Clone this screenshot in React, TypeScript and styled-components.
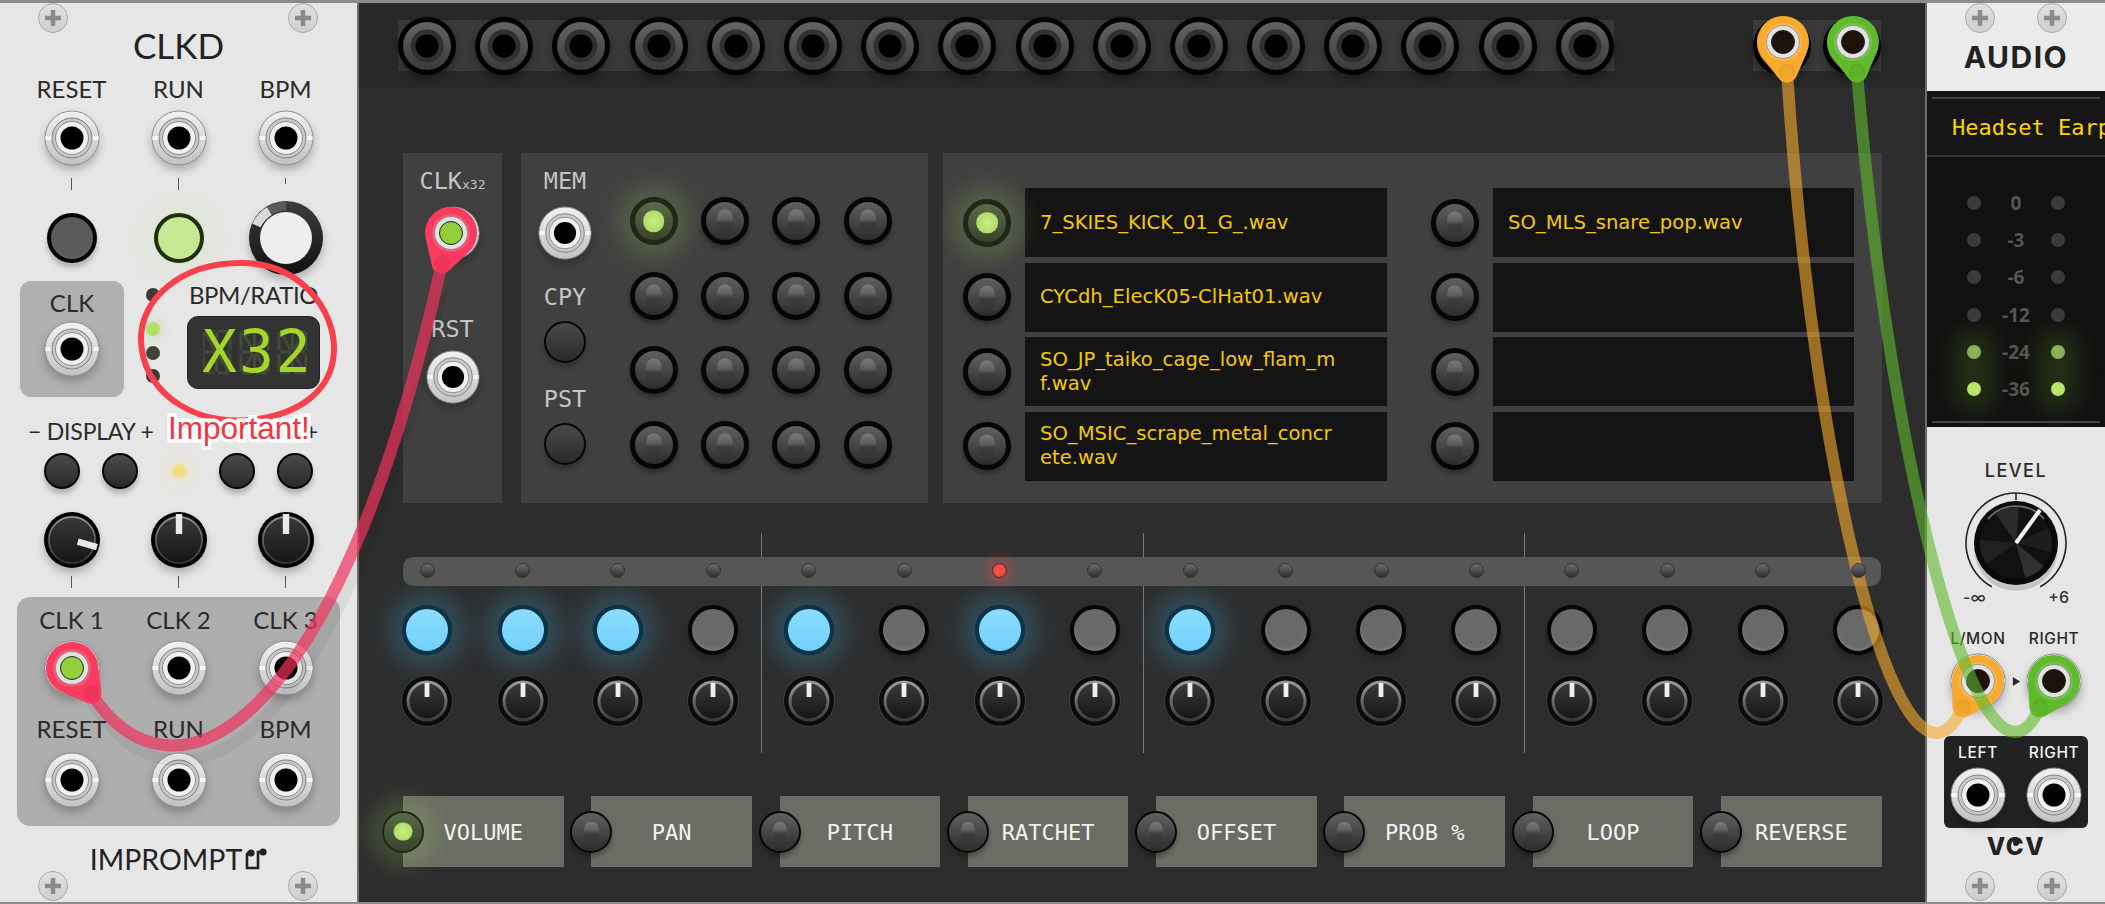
import React from 'react';
import styled, { createGlobalStyle } from 'styled-components';

const LABEL_FONT = `Lato, "Noto Sans", sans-serif`;
const MONO_FONT = `"DejaVu Sans Mono", monospace`;

const GlobalStyle = createGlobalStyle`
    html, body {
        margin: 0;
        padding: 0;
        background: #8b8b8b;
        font-family: ${LABEL_FONT};
    }
`;

const Rack = styled.div`
    position: relative;
    display: flex;
    box-sizing: border-box;
    width: 2105px;
    height: 904px;
    padding: 3px 0 2px;
    overflow: hidden;
    background: #8b8b8b;
`;

const Defs = styled.svg`
    position: absolute;
    width: 0;
    height: 0;
`;

/* ---------- shared drawings ---------- */

const Drawing = styled.svg<{ $size: number; $shadow?: string }>`
    display: block;
    flex: none;
    width: ${(p) => p.$size}px;
    height: ${(p) => p.$size}px;
    overflow: visible;
    filter: ${(p) => p.$shadow ?? 'none'};
`;

const LIGHT_SHADOW = 'drop-shadow(0 5px 4px rgba(0,0,0,.24))';
const DARK_SHADOW = 'drop-shadow(0 4px 4px rgba(0,0,0,.35))';

const SilverJack = ({ size = 56 }: { size?: number }) => (
    <Drawing viewBox="0 0 56 56" $size={size} $shadow={LIGHT_SHADOW}>
        <circle cx="28" cy="28" r="27" fill="url(#silver)" stroke="#8d8d8d" />
        <rect x="1.5" y="26" width="53" height="4" fill="#f6f6f6" />
        <circle cx="28" cy="28" r="20" fill="#c8c8c8" stroke="#808080" />
        <circle cx="28" cy="28" r="16.5" fill="#f0f0f0" stroke="#8a8a8a" />
        <circle cx="28" cy="28" r="11.5" fill="#000" />
    </Drawing>
);

const DarkJack = () => (
    <Drawing viewBox="0 0 58 58" $size={58} $shadow={DARK_SHADOW}>
        <circle cx="29" cy="29" r="29" fill="#000" />
        <circle cx="29" cy="29" r="24" fill="url(#darkRing)" />
        <circle cx="29" cy="29" r="16.5" fill="#303030" />
        <circle cx="29" cy="29" r="11.5" fill="#000" />
    </Drawing>
);

const Screw = () => (
    <Drawing viewBox="0 0 30 30" $size={30}>
        <circle cx="15" cy="15" r="14.5" fill="url(#screw)" stroke="#a8a8a8" />
        <path d="M15 7v16M7 15h16" stroke="#8a8a8a" strokeWidth="4.5" />
    </Drawing>
);

const BlackKnob = ({ angle = 0 }: { angle?: number }) => (
    <Drawing viewBox="0 0 56 56" $size={56} $shadow={LIGHT_SHADOW}>
        <circle cx="28" cy="28" r="28" fill="#000" />
        <circle cx="28" cy="28" r="24.5" fill="url(#knobFace)" />
        <circle cx="28" cy="28" r="23" fill="none" stroke="url(#knobEdge)" strokeWidth="1.4" />
        <rect x="24.8" y="2" width="6.4" height="20" fill="#e9e9e9" transform={`rotate(${angle} 28 28)`} />
    </Drawing>
);

const StepKnob = () => (
    <Drawing viewBox="0 0 52 52" $size={52}>
        <circle cx="26" cy="26" r="25.5" fill="#0b0b0b" stroke="#414141" />
        <circle cx="26" cy="26" r="19" fill="url(#knobFace)" stroke="url(#knobEdge)" strokeWidth="3" />
        <rect x="23.6" y="8" width="4.8" height="14" fill="#eeeeee" />
    </Drawing>
);

const WhiteKnob = () => (
    <Drawing viewBox="0 0 74 74" $size={74} $shadow={LIGHT_SHADOW}>
        <circle cx="37" cy="37" r="37" fill="url(#whiteKnobRim)" />
        <path d="M7.5 24.5A32 32 0 0 1 20.5 10" fill="none" stroke="#d9d9d9" strokeWidth="9" />
        <path d="M20.5 10A32 32 0 0 1 37 5" fill="none" stroke="#5a5a5a" strokeWidth="9" />
        <circle cx="37" cy="37" r="26" fill="#eeeeee" />
    </Drawing>
);

const wedge = (from: number, to: number, r: number, c: number) => {
    const rad = (d: number) => ((d - 90) * Math.PI) / 180;
    const x1 = c + r * Math.cos(rad(from));
    const y1 = c + r * Math.sin(rad(from));
    const x2 = c + r * Math.cos(rad(to));
    const y2 = c + r * Math.sin(rad(to));
    return `M${c} ${c}L${x1} ${y1}A${r} ${r} 0 0 1 ${x2} ${y2}Z`;
};

const LevelKnob = () => (
    <Drawing viewBox="0 0 110 110" $size={110}>
        <path d="M30.8 98.7A50 50 0 1 1 79.2 98.7" fill="none" stroke="#222" strokeWidth="1.6" />
        <path d="M55 5v7" stroke="#222" strokeWidth="1.6" />
        <circle cx="55" cy="61" r="42" fill="#bdbdbd" opacity=".8" />
        <circle cx="55" cy="55" r="42" fill="#0a0a0a" />
        <path d="M27 31A37 37 0 0 1 83 31" fill="none" stroke="#6a6a6a" strokeWidth="2" />
        <circle cx="55" cy="55" r="36" fill="#111" />
        <path d={wedge(-35, 5, 36, 55)} fill="#2a2a2a" />
        <path d={wedge(65, 105, 36, 55)} fill="#1d1d1d" />
        <path d={wedge(130, 165, 36, 55)} fill="#303030" />
        <path d={wedge(235, 275, 36, 55)} fill="#202020" />
        <path d="M55 55L79 22" stroke="#f2f2f2" strokeWidth="4" />
    </Drawing>
);

const DropMark = () => (
    <Drawing viewBox="0 0 10 10" $size={9}>
        <path d="M1 0L9 5L1 10Z" fill="#2a2a2a" />
    </Drawing>
);

/* ---------- buttons and lights ---------- */

type PadTone = 'slate' | 'grey' | 'soft' | 'blue' | 'green';

const Pad = styled.div<{ $size: number; $border: number; $tone: PadTone }>`
    box-sizing: border-box;
    flex: none;
    width: ${(p) => p.$size}px;
    height: ${(p) => p.$size}px;
    border-radius: 50%;
    border: ${(p) => p.$border}px solid
        ${(p) => (p.$tone === 'blue' ? '#08344a' : p.$tone === 'green' ? '#20300e' : '#050505')};
    background: ${(p) =>
        p.$tone === 'blue'
            ? 'linear-gradient(#8cdcff, #72d0fb)'
            : p.$tone === 'green'
            ? '#c6e794'
            : p.$tone === 'grey'
            ? 'radial-gradient(circle at 50% 45%, #696969 60%, #7d7d7d 75%, #565656)'
            : p.$tone === 'slate'
            ? 'radial-gradient(circle at 50% 45%, #5a5a5a 60%, #666 80%, #4a4a4a)'
            : 'linear-gradient(#4a4a4a, #2a2a2a)'};
    box-shadow: ${(p) =>
        p.$tone === 'blue'
            ? '0 0 22px 15px rgba(64, 158, 205, .26)'
            : p.$tone === 'green'
            ? '0 0 26px 12px rgba(200, 230, 150, .18)'
            : '0 5px 5px rgba(0, 0, 0, .22)'};
`;

const BezelButton = styled.div<{ $size: number; $on?: boolean }>`
    position: relative;
    box-sizing: border-box;
    flex: none;
    width: ${(p) => p.$size}px;
    height: ${(p) => p.$size}px;
    border-radius: 50%;
    border: ${(p) => (p.$size > 44 ? 5 : 2)}px solid ${(p) => (p.$on ? '#1d2914' : '#060606')};
    background: ${(p) =>
        p.$on ? 'linear-gradient(#5a6a48, #39432c)' : 'linear-gradient(#606060, #2c2c2c)'};
    box-shadow: ${(p) =>
        p.$on ? '0 0 24px 12px rgba(170, 220, 100, .22)' : '0 4px 4px rgba(0, 0, 0, .28)'};

    &::after {
        content: '';
        position: absolute;
        left: 50%;
        top: 50%;
        width: ${(p) => (p.$on ? p.$size * 0.45 : p.$size * 0.34)}px;
        height: ${(p) => (p.$on ? p.$size * 0.45 : p.$size * 0.48)}px;
        border-radius: ${(p) => (p.$on ? '50%' : '42%')};
        transform: translate(-50%, -50%);
        background: ${(p) =>
            p.$on
                ? 'radial-gradient(circle, #c8ee83, #a4d45c)'
                : 'linear-gradient(#7a7a7a, #5e5e5e 42%, #3c3c3c 58%, #363636)'};
    }
`;

const Led = styled.div<{ $color: string; $glow?: string; $size?: number }>`
    flex: none;
    width: ${(p) => p.$size ?? 14}px;
    height: ${(p) => p.$size ?? 14}px;
    border-radius: 50%;
    background: ${(p) => p.$color};
    box-shadow: ${(p) => p.$glow ?? 'none'};
`;

const BarLed = styled.div<{ $red?: boolean }>`
    position: relative;
    z-index: 1;
    box-sizing: border-box;
    width: 15px;
    height: 15px;
    border-radius: 50%;
    border: 1px solid #333;
    background: ${(p) =>
        p.$red ? 'radial-gradient(circle, #ff5b50, #ee3a30)' : 'linear-gradient(#6c6c6c, #303030)'};
    box-shadow: ${(p) => (p.$red ? '0 0 12px 5px rgba(255, 60, 50, .38)' : 'none')};
`;

/* ---------- left module ---------- */

const LeftPanel = styled.div`
    flex: none;
    width: 357px;
    background: #e6e6e6;
    border-right: 2px solid #6d6d6d;
`;

const ScrewRow = styled.div<{ $left: number; $gap: number; $top?: number }>`
    display: flex;
    height: 30px;
    gap: ${(p) => p.$gap}px;
    padding-left: ${(p) => p.$left}px;
    margin-top: ${(p) => p.$top ?? 0}px;
`;

const Title = styled.div`
    height: 24px;
    line-height: 24px;
    text-align: center;
    font-size: 35px;
    color: #222;
`;

const ThreeCol = styled.div<{ $top: number; $height: number; $left?: number }>`
    display: grid;
    grid-template-columns: repeat(3, 107px);
    justify-items: center;
    align-items: center;
    height: ${(p) => p.$height}px;
    margin-top: ${(p) => p.$top}px;
    padding-left: ${(p) => p.$left ?? 18}px;
`;

const PanelLabel = styled.div<{ $size?: number }>`
    font-size: ${(p) => p.$size ?? 24}px;
    line-height: 20px;
    color: #2a2a2a;
    white-space: nowrap;
`;

const Tick = styled.div<{ $short?: boolean }>`
    width: 1px;
    height: ${(p) => (p.$short ? 6 : 12)}px;
    align-self: start;
    background: #555;
`;

const MiddleRow = styled.div`
    display: flex;
    height: 116px;
    margin-top: 30px;
    padding-left: 20px;
`;

const ClkBox = styled.div`
    display: flex;
    flex-direction: column;
    align-items: center;
    gap: 8px;
    width: 104px;
    padding-top: 12px;
    box-sizing: border-box;
    border-radius: 11px;
    background: #b0b0b0;
`;

const LedColumn = styled.div`
    display: flex;
    flex-direction: column;
    gap: 9.5px;
    width: 14px;
    margin-left: 22px;
    padding-top: 7px;

    & > :first-child {
        margin-bottom: 10.5px;
    }
`;

const RatioBlock = styled.div`
    width: 133px;
    margin-left: 27px;
`;

const RatioLabel = styled(PanelLabel)`
    height: 28px;
    line-height: 28px;
    margin-bottom: 7px;
    text-align: center;
    letter-spacing: -0.4px;
`;

const SegmentDisplay = styled.div`
    position: relative;
    box-sizing: border-box;
    height: 73px;
    padding-left: 14px;
    border: 1px solid #222;
    border-radius: 11px;
    background: #333;
    overflow: hidden;
`;

const GhostSegments = styled.svg`
    position: absolute;
    left: 15px;
    top: 13px;
    width: 104px;
    height: 45px;
`;

const SegmentText = styled.div`
    position: relative;
    font-family: ${MONO_FONT};
    font-size: 58px;
    line-height: 71px;
    letter-spacing: 2px;
    color: #a5d72b;
`;

const DisplayLabels = styled.div`
    display: flex;
    justify-content: space-between;
    height: 22px;
    margin-top: 23px;
    padding: 0 39px 0 28px;
    font-size: 23px;
    line-height: 22px;
    letter-spacing: -0.2px;
    color: #2a2a2a;
`;

const DisplayRow = styled.div`
    display: grid;
    grid-template-columns: repeat(5, 58.25px);
    justify-items: center;
    align-items: center;
    height: 36px;
    margin-top: 11px;
    padding-left: 33px;
`;

const GroupBox = styled.div`
    width: 323px;
    height: 229px;
    margin: 9px 0 0 17px;
    padding-top: 13px;
    box-sizing: border-box;
    border-radius: 13px;
    background: #aeaeae;
`;

const BrandRow = styled.div`
    display: flex;
    justify-content: center;
    align-items: center;
    gap: 1px;
    height: 25px;
    margin-top: 20px;
    font-size: 28.5px;
    color: #222;
`;

const NoteMark = styled.svg`
    width: 24px;
    height: 24px;
`;

/* ---------- middle module ---------- */

const MiddlePanel = styled.div`
    flex: 1;
    min-width: 0;
    background: #2d2d2d;
`;

const TopBand = styled.div`
    display: flex;
    align-items: center;
    height: 85px;
    padding-left: 39px;
    background: #282828;
`;

const JackStrip = styled.div<{ $gap: number; $left?: number }>`
    display: flex;
    align-items: center;
    gap: ${(p) => p.$gap}px;
    height: 51px;
    margin-left: ${(p) => p.$left ?? 0}px;
    background: #3a3a3a;
`;

const PanelRow = styled.div`
    display: flex;
    height: 350px;
    margin-top: 65px;
    padding-left: 44px;
`;

const Block = styled.div<{ $width: number; $left?: number }>`
    box-sizing: border-box;
    flex: none;
    width: ${(p) => p.$width}px;
    margin-left: ${(p) => p.$left ?? 0}px;
    background: #404040;
`;

const StackColumn = styled.div<{ $width?: number }>`
    display: flex;
    flex-direction: column;
    align-items: center;
    width: ${(p) => (p.$width ? `${p.$width}px` : 'auto')};
    padding-top: 17px;
    flex: none;
`;

const MonoLabel = styled.div<{ $top?: number }>`
    height: 22px;
    margin-top: ${(p) => p.$top ?? 0}px;
    font-family: ${MONO_FONT};
    font-size: 23.5px;
    line-height: 22px;
    color: #c4c4c4;
    white-space: nowrap;
`;

const SmallMono = styled.span`
    font-size: 13px;
`;

const Spaced = styled.div<{ $top: number }>`
    margin-top: ${(p) => p.$top}px;
`;

const MemBlock = styled(Block)`
    display: flex;
`;

const MemGrid = styled.div`
    display: grid;
    grid-template-columns: repeat(4, 71.3px);
    grid-template-rows: repeat(4, 74.6px);
    justify-items: center;
    align-items: center;
    margin: 31px 0 0 9px;
`;

const SampleGrid = styled.div`
    display: grid;
    grid-template-columns: 82.5px 362px 106px 361px;
    grid-auto-rows: 69px;
    row-gap: 5.6px;
    align-items: center;
    padding-top: 35px;
`;

const SampleButton = styled.div`
    justify-self: end;
    margin-right: 14px;
`;

const SampleBox = styled.div`
    display: flex;
    align-items: center;
    box-sizing: border-box;
    height: 69px;
    padding-left: 15px;
    background: #141414;
    font-family: "DejaVu Sans", sans-serif;
    font-size: 19.6px;
    line-height: 24px;
    color: #f6c900;
    white-space: pre-line;
`;

const StepArea = styled.div`
    position: relative;
    display: flex;
    height: 220px;
    margin-top: 30px;
    padding-left: 20.5px;
`;

const StepBar = styled.div`
    position: absolute;
    left: 44px;
    top: 24px;
    width: 1478px;
    height: 29px;
    border-radius: 10px;
    background: #565656;
`;

const StepGroup = styled.div<{ $divider: boolean }>`
    display: grid;
    grid-template-columns: repeat(4, 95.4px);
    flex: none;
    box-shadow: ${(p) => (p.$divider ? '1px 0 0 #787878' : 'none')};
`;

const Step = styled.div`
    display: flex;
    flex-direction: column;
    align-items: center;
    padding-top: 30px;
`;

const ModeRow = styled.div`
    display: flex;
    gap: 27.8px;
    margin-top: 43px;
    padding-left: 44px;
`;

const ModeBox = styled.div`
    display: flex;
    align-items: center;
    flex: none;
    width: 160.5px;
    height: 71px;
    background: #6b6c63;
`;

const ModeSwitch = styled.div`
    margin: 0 -21px;
`;

const ModeLabel = styled.div`
    flex: 1;
    padding-top: 2px;
    text-align: center;
    font-family: ${MONO_FONT};
    font-size: 22px;
    color: #f2f2f2;
`;

/* ---------- right module ---------- */

const RightPanel = styled.div`
    flex: none;
    width: 178px;
    border-left: 2px solid #6d6d6d;
    background: #e6e6e6;
    overflow: hidden;
`;

const AudioHead = styled.div`
    height: 88px;
    background: #ebebeb;
`;

const AudioTitle = styled.div`
    height: 28px;
    margin-top: 10px;
    text-align: center;
    font-family: Inter, ${LABEL_FONT};
    font-weight: 700;
    font-size: 30px;
    line-height: 28px;
    letter-spacing: 1.5px;
    color: #222;
`;

const MeterScreen = styled.div`
    height: 336px;
    background: #111;
    overflow: hidden;
`;

const DeviceRow = styled.div`
    box-sizing: border-box;
    height: 66px;
    margin-bottom: 27.4px;
    padding: 6px 5px 0;
    border-bottom: 2px solid #333;
    background: #161616;
`;

const DeviceRule = styled.div<{ $top?: number }>`
    height: 2px;
    margin-top: ${(p) => p.$top ?? 0}px;
    background: #444;
`;

const DeviceName = styled.div`
    margin: 16px 0 0 20px;
    font-family: ${MONO_FONT};
    font-size: 22px;
    line-height: 26px;
    color: #ffd400;
    white-space: nowrap;
`;

const MeterRow = styled.div`
    display: grid;
    grid-template-columns: 22px 62px 22px;
    justify-items: center;
    align-items: center;
    height: 37.2px;
    padding-left: 36px;
`;

const MeterLabel = styled.div`
    font-family: "Noto Sans", sans-serif;
    font-weight: 700;
    font-size: 19px;
    color: #555;
`;

const MeterFoot = styled.div`
    margin: 13px 5px 0;
`;

const LevelSection = styled.div`
    display: flex;
    flex-direction: column;
    align-items: center;
    padding-top: 33px;
`;

const LevelLabel = styled.div`
    height: 22px;
    font-family: Inter, ${LABEL_FONT};
    font-weight: 500;
    font-size: 18px;
    line-height: 22px;
    letter-spacing: 1.5px;
    color: #2a2a2a;
`;

const RangeRow = styled.div`
    display: flex;
    justify-content: space-between;
    width: 106px;
    height: 18px;
    margin-top: -10px;
    font-family: Inter, ${LABEL_FONT};
    font-weight: 500;
    font-size: 16px;
    line-height: 18px;
    color: #333;
`;

const TwoCol = styled.div<{ $top: number; $height: number; $left?: number }>`
    display: grid;
    grid-template-columns: 66px 10px 66px;
    justify-items: center;
    align-items: center;
    align-self: flex-start;
    height: ${(p) => p.$height}px;
    margin-top: ${(p) => p.$top}px;
    padding-left: ${(p) => p.$left ?? 18}px;
`;

const JackLabel = styled.div<{ $light?: boolean }>`
    font-family: Inter, ${LABEL_FONT};
    font-weight: 500;
    font-size: 15.5px;
    line-height: 18px;
    letter-spacing: 0.6px;
    white-space: nowrap;
    color: ${(p) => (p.$light ? '#f2f2f2' : '#2a2a2a')};
`;

const OutputBox = styled.div`
    align-self: flex-start;
    box-sizing: border-box;
    width: 144px;
    height: 92px;
    margin: 27px 0 0 17px;
    padding-top: 8px;
    border-radius: 6px;
    background: #222;
`;

const VcvLogo = styled.div`
    height: 22px;
    margin-top: 8px;
    font-family: Inter, ${LABEL_FONT};
    font-weight: 800;
    font-size: 24px;
    line-height: 22px;
    letter-spacing: 1.5px;
    color: #222;
`;

const VcvDot = styled.span`
    position: relative;

    &::after {
        content: '';
        position: absolute;
        left: 7px;
        top: 8px;
        width: 6px;
        height: 6px;
        border-radius: 50%;
        background: #222;
    }
`;

/* ---------- overlays ---------- */

const CableLayer = styled.svg`
    position: absolute;
    left: 0;
    top: 0;
    width: 2105px;
    height: 904px;
    pointer-events: none;
`;

const ImportantNote = styled.div`
    position: absolute;
    left: 168px;
    top: 409px;
    font-family: "Liberation Sans", Arial, sans-serif;
    font-size: 31.5px;
    line-height: 38px;
    color: #f4353f;
    -webkit-text-stroke: 7px #fff;
    paint-order: stroke fill;
    white-space: nowrap;
`;

/* ---------- data ---------- */

const segmentPath =
    'M1 1H12M15 1H26M0 2V20M13.5 2V20M27 2V20M0 24V42M13.5 24V42M27 24V42M1 22H12M15 22H26M1 43H12M15 43H26M2 3L12 20M25 3L15 20M2 41L12 24M25 41L15 24';

const SAMPLES = [
    ['7_SKIES_KICK_01_G_.wav', 'SO_MLS_snare_pop.wav'],
    ['CYCdh_ElecK05-ClHat01.wav', ''],
    ['SO_JP_taiko_cage_low_flam_m\nf.wav', ''],
    ['SO_MSIC_scrape_metal_concr\nete.wav', ''],
];

const MODES = ['VOLUME', 'PAN', 'PITCH', 'RATCHET', 'OFFSET', 'PROB %', 'LOOP', 'REVERSE'];
const ACTIVE_STEPS = [0, 1, 2, 4, 6, 8];
const LEVELS = ['0', '-3', '-6', '-12', '-24', '-36'];
const METER_GLOW = '0 0 26px 14px rgba(130, 190, 50, .2)';

const plugPath = (cx: number, cy: number, R: number, tx: number, ty: number, r: number) => {
    const d = Math.hypot(tx - cx, ty - cy);
    const a = Math.atan2(ty - cy, tx - cx);
    const b = Math.acos((R - r) / d);
    const pt = (x: number, y: number, rad: number, ang: number) =>
        `${(x + rad * Math.cos(ang)).toFixed(1)} ${(y + rad * Math.sin(ang)).toFixed(1)}`;
    return `M${pt(cx, cy, R, a + b)}L${pt(tx, ty, r, a + b)}A${r} ${r} 0 0 0 ${pt(tx, ty, r, a - b)}L${pt(
        cx,
        cy,
        R,
        a - b
    )}A${R} ${R} 0 1 0 ${pt(cx, cy, R, a + b)}Z`;
};

const Plug = ({
    x,
    y,
    tx,
    ty,
    color,
    hole,
}: {
    x: number;
    y: number;
    tx: number;
    ty: number;
    color: string;
    hole: string;
}) => (
    <g>
        <path d={plugPath(x, y, 26, tx, ty, 10.5)} fill={color} />
        <circle cx={tx} cy={ty} r="8" fill="#000" opacity=".07" />
        <circle cx={x} cy={y} r="19" fill="#fff" opacity=".14" />
        <circle cx={x} cy={y} r="16.5" fill="#e2e2e2" stroke="#8a8a8a" strokeWidth=".8" />
        <circle cx={x} cy={y} r="11.5" fill={hole} stroke="#222" strokeWidth="1" />
    </g>
);

const App: React.FC = () => {
    return (
        <Rack>
            <GlobalStyle />
            <Defs>
                <defs>
                    <linearGradient id="silver" x1="0" y1="0" x2="0" y2="1">
                        <stop offset="0" stopColor="#f2f2f2" />
                        <stop offset="1" stopColor="#c2c2c2" />
                    </linearGradient>
                    <linearGradient id="darkRing" x1="0" y1="0" x2="0" y2="1">
                        <stop offset="0" stopColor="#646464" />
                        <stop offset="1" stopColor="#3a3a3a" />
                    </linearGradient>
                    <linearGradient id="screw" x1="0" y1="0" x2="0" y2="1">
                        <stop offset="0" stopColor="#e2e2e2" />
                        <stop offset="1" stopColor="#cecece" />
                    </linearGradient>
                    <linearGradient id="knobFace" x1="0" y1="0" x2="0" y2="1">
                        <stop offset="0" stopColor="#3a3a3a" />
                        <stop offset="1" stopColor="#141414" />
                    </linearGradient>
                    <linearGradient id="knobEdge" x1="0" y1="0" x2="0" y2="1">
                        <stop offset="0" stopColor="#9a9a9a" />
                        <stop offset="1" stopColor="#3a3a3a" />
                    </linearGradient>
                    <linearGradient id="whiteKnobRim" x1="0" y1="0" x2="0" y2="1">
                        <stop offset="0" stopColor="#3d3d3d" />
                        <stop offset="1" stopColor="#111" />
                    </linearGradient>
                </defs>
            </Defs>

            <LeftPanel>
                <ScrewRow $left={38} $gap={220}>
                    <Screw />
                    <Screw />
                </ScrewRow>
                <Title>CLKD</Title>
                <ThreeCol $top={22} $height={20}>
                    <PanelLabel>RESET</PanelLabel>
                    <PanelLabel>RUN</PanelLabel>
                    <PanelLabel>BPM</PanelLabel>
                </ThreeCol>
                <ThreeCol $top={11} $height={56}>
                    <SilverJack />
                    <SilverJack />
                    <SilverJack />
                </ThreeCol>
                <ThreeCol $top={12} $height={12}>
                    <Tick />
                    <Tick />
                    <Tick $short />
                </ThreeCol>
                <ThreeCol $top={11} $height={50}>
                    <Pad $size={50} $border={4} $tone="slate" />
                    <Pad $size={50} $border={4} $tone="green" />
                    <WhiteKnob />
                </ThreeCol>
                <MiddleRow>
                    <ClkBox>
                        <PanelLabel>CLK</PanelLabel>
                        <SilverJack />
                    </ClkBox>
                    <LedColumn>
                        <Led $color="#3a3a3a" />
                        <Led $color="#b4e068" $glow="0 0 10px 4px rgba(170,220,100,.25)" />
                        <Led $color="#3f4434" />
                        <Led $color="#3a3a3a" />
                    </LedColumn>
                    <RatioBlock>
                        <RatioLabel>BPM/RATIO</RatioLabel>
                        <SegmentDisplay>
                            <GhostSegments viewBox="0 0 104 45">
                                {[0, 38, 76].map((x) => (
                                    <path
                                        key={x}
                                        d={segmentPath}
                                        transform={`translate(${x} 0)`}
                                        fill="none"
                                        stroke="#434b36"
                                        strokeWidth="3"
                                    />
                                ))}
                            </GhostSegments>
                            <SegmentText>X32</SegmentText>
                        </SegmentDisplay>
                    </RatioBlock>
                </MiddleRow>
                <DisplayLabels>
                    <span>− DISPLAY +</span>
                    <span>+</span>
                </DisplayLabels>
                <DisplayRow>
                    <Pad $size={36} $border={2} $tone="soft" />
                    <Pad $size={36} $border={2} $tone="soft" />
                    <Led $color="#f4dc80" $glow="0 0 14px 8px rgba(250,225,130,.2)" />
                    <Pad $size={36} $border={2} $tone="soft" />
                    <Pad $size={36} $border={2} $tone="soft" />
                </DisplayRow>
                <ThreeCol $top={23} $height={56}>
                    <BlackKnob angle={106} />
                    <BlackKnob />
                    <BlackKnob />
                </ThreeCol>
                <ThreeCol $top={8} $height={12}>
                    <Tick />
                    <Tick />
                    <Tick />
                </ThreeCol>
                <GroupBox>
                    <ThreeCol $top={0} $height={20} $left={1}>
                        <PanelLabel>CLK 1</PanelLabel>
                        <PanelLabel>CLK 2</PanelLabel>
                        <PanelLabel>CLK 3</PanelLabel>
                    </ThreeCol>
                    <ThreeCol $top={10} $height={56} $left={1}>
                        <SilverJack />
                        <SilverJack />
                        <SilverJack />
                    </ThreeCol>
                    <ThreeCol $top={23} $height={20} $left={1}>
                        <PanelLabel>RESET</PanelLabel>
                        <PanelLabel>RUN</PanelLabel>
                        <PanelLabel>BPM</PanelLabel>
                    </ThreeCol>
                    <ThreeCol $top={13} $height={56} $left={1}>
                        <SilverJack />
                        <SilverJack />
                        <SilverJack />
                    </ThreeCol>
                </GroupBox>
                <BrandRow>
                    IMPROMPT
                    <NoteMark viewBox="0 0 24 24">
                        <path d="M4 6V21H15V5H20" fill="none" stroke="#222" strokeWidth="2.6" />
                        <path d="M4 6H9" stroke="#222" strokeWidth="2.6" />
                        <circle cx="8" cy="6" r="3.6" fill="#222" />
                        <circle cx="20" cy="5" r="3.6" fill="#222" />
                    </NoteMark>
                </BrandRow>
                <ScrewRow $left={38} $gap={220}>
                    <Screw />
                    <Screw />
                </ScrewRow>
            </LeftPanel>

            <MiddlePanel>
                <TopBand>
                    <JackStrip $gap={19.2}>
                        {Array.from({ length: 16 }, (_, i) => (
                            <DarkJack key={i} />
                        ))}
                    </JackStrip>
                    <JackStrip $gap={12} $left={139}>
                        <DarkJack />
                        <DarkJack />
                    </JackStrip>
                </TopBand>

                <PanelRow>
                    <Block $width={99}>
                        <StackColumn>
                            <MonoLabel>
                                CLK<SmallMono>x32</SmallMono>
                            </MonoLabel>
                            <Spaced $top={14}>
                                <SilverJack size={54} />
                            </Spaced>
                            <MonoLabel $top={58}>RST</MonoLabel>
                            <Spaced $top={10}>
                                <SilverJack size={54} />
                            </Spaced>
                        </StackColumn>
                    </Block>
                    <MemBlock $width={407} $left={19}>
                        <StackColumn $width={88}>
                            <MonoLabel>MEM</MonoLabel>
                            <Spaced $top={14}>
                                <SilverJack size={54} />
                            </Spaced>
                            <MonoLabel $top={26}>CPY</MonoLabel>
                            <Spaced $top={13}>
                                <Pad $size={42} $border={2} $tone="soft" />
                            </Spaced>
                            <MonoLabel $top={25}>PST</MonoLabel>
                            <Spaced $top={13}>
                                <Pad $size={42} $border={2} $tone="soft" />
                            </Spaced>
                        </StackColumn>
                        <MemGrid>
                            {Array.from({ length: 16 }, (_, i) => (
                                <BezelButton key={i} $size={48} $on={i === 0} />
                            ))}
                        </MemGrid>
                    </MemBlock>
                    <Block $width={939} $left={14.5}>
                        <SampleGrid>
                            {SAMPLES.flatMap((row, r) =>
                                row.flatMap((name, c) => [
                                    <SampleButton key={`b${r}${c}`}>
                                        <BezelButton $size={48} $on={r === 0 && c === 0} />
                                    </SampleButton>,
                                    <SampleBox key={`s${r}${c}`}>{name}</SampleBox>,
                                ])
                            )}
                        </SampleGrid>
                    </Block>
                </PanelRow>

                <StepArea>
                    {[0, 1, 2, 3].map((g) => (
                        <StepGroup key={g} $divider={g < 3}>
                            {[0, 1, 2, 3].map((s) => {
                                const index = g * 4 + s;
                                const on = ACTIVE_STEPS.includes(index);
                                return (
                                    <Step key={s}>
                                        <BarLed $red={index === 6} />
                                        <Spaced $top={27}>
                                            <Pad $size={50} $border={4} $tone={on ? 'blue' : 'grey'} />
                                        </Spaced>
                                        <Spaced $top={20}>
                                            <StepKnob />
                                        </Spaced>
                                    </Step>
                                );
                            })}
                        </StepGroup>
                    ))}
                    <StepBar />
                </StepArea>

                <ModeRow>
                    {MODES.map((mode, i) => (
                        <ModeBox key={mode}>
                            <ModeSwitch>
                                <BezelButton $size={42} $on={i === 0} />
                            </ModeSwitch>
                            <ModeLabel>{mode}</ModeLabel>
                        </ModeBox>
                    ))}
                </ModeRow>
            </MiddlePanel>

            <RightPanel>
                <AudioHead>
                    <ScrewRow $left={38} $gap={42}>
                        <Screw />
                        <Screw />
                    </ScrewRow>
                    <AudioTitle>AUDIO</AudioTitle>
                </AudioHead>
                <MeterScreen>
                    <DeviceRow>
                        <DeviceRule />
                        <DeviceName>Headset Earpiece</DeviceName>
                    </DeviceRow>
                    {LEVELS.map((level, i) => {
                        const color = i === 5 ? '#b6e568' : i === 4 ? '#8eaf5c' : '#3a3a3a';
                        const glow = i >= 4 ? METER_GLOW : undefined;
                        return (
                            <MeterRow key={level}>
                                <Led $color={color} $glow={glow} />
                                <MeterLabel>{level}</MeterLabel>
                                <Led $color={color} $glow={glow} />
                            </MeterRow>
                        );
                    })}
                    <MeterFoot>
                        <DeviceRule />
                    </MeterFoot>
                </MeterScreen>
                <LevelSection>
                    <LevelLabel>LEVEL</LevelLabel>
                    <Spaced $top={6}>
                        <LevelKnob />
                    </Spaced>
                    <RangeRow>
                        <span>-∞</span>
                        <span>+6</span>
                    </RangeRow>
                    <TwoCol $top={24} $height={18}>
                        <JackLabel>L/MON</JackLabel>
                        <span />
                        <JackLabel>RIGHT</JackLabel>
                    </TwoCol>
                    <TwoCol $top={5} $height={56}>
                        <SilverJack />
                        <DropMark />
                        <SilverJack />
                    </TwoCol>
                    <OutputBox>
                        <TwoCol $top={0} $height={18} $left={1}>
                            <JackLabel $light>LEFT</JackLabel>
                            <span />
                            <JackLabel $light>RIGHT</JackLabel>
                        </TwoCol>
                        <TwoCol $top={5} $height={56} $left={1}>
                            <SilverJack />
                            <span />
                            <SilverJack />
                        </TwoCol>
                    </OutputBox>
                    <VcvLogo>
                        V<VcvDot>C</VcvDot>V
                    </VcvLogo>
                    <ScrewRow $left={0} $gap={42} $top={13}>
                        <Screw />
                        <Screw />
                    </ScrewRow>
                </LevelSection>
            </RightPanel>

            <CableLayer viewBox="0 0 2105 904">
                <path
                    d="M91 700C170 830 335 775 442 290"
                    fill="none"
                    stroke="#000"
                    strokeOpacity=".05"
                    strokeWidth="12"
                />
                <Plug x={72} y={668} tx={91} ty={693} color="#fb3a5f" hole="#93cf3a" />
                <Plug x={451} y={233} tx={442} ty={263} color="#fb3a5f" hole="#93cf3a" />
                <Plug x={1783} y={42} tx={1787} ty={72} color="#f7aa2d" hole="#1e130a" />
                <Plug x={1853} y={42} tx={1857} ty={72} color="#5fba2c" hole="#1e130a" />
                <Plug x={1978} y={681} tx={1963} ty={707} color="#f7aa2d" hole="#1e130a" />
                <Plug x={2054} y={681} tx={2040} ty={707} color="#5fba2c" hole="#1e130a" />
                <path
                    d="M91 693C170 815 335 745 442 263"
                    fill="none"
                    stroke="#f0325a"
                    strokeOpacity=".7"
                    strokeWidth="12"
                    strokeLinecap="round"
                />
                <path
                    d="M1787 72C1815 500 1905 830 1963 707"
                    fill="none"
                    stroke="#f7aa2d"
                    strokeOpacity=".6"
                    strokeWidth="12"
                    strokeLinecap="round"
                />
                <path
                    d="M1857 72C1890 480 1985 830 2040 707"
                    fill="none"
                    stroke="#5fb92d"
                    strokeOpacity=".6"
                    strokeWidth="12"
                    strokeLinecap="round"
                />
                <path
                    d="M240 263C300 262 335 310 334 350C333 390 300 415 250 420C190 425 142 390 141 340C140 300 180 263 240 263Z"
                    fill="none"
                    stroke="#f8404c"
                    strokeWidth="6"
                />
            </CableLayer>
            <ImportantNote>Important!</ImportantNote>
        </Rack>
    );
};

export default App;
